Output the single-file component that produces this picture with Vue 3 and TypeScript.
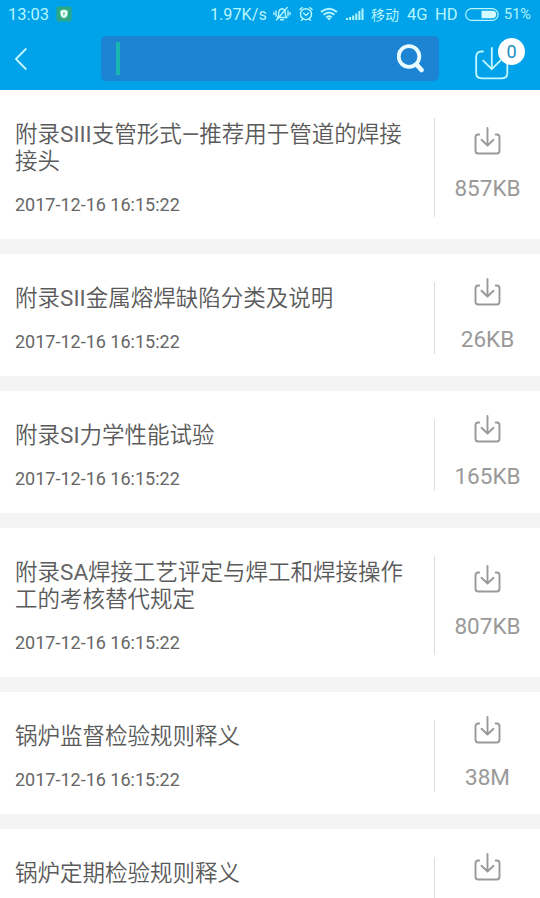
<script setup lang="ts">
interface Doc {
  title: string
  size: string
  date: string
}

const date = '2017-12-16 16:15:22'
const docs: Doc[] = [
  { title: '附录SIII支管形式—推荐用于管道的焊接接头', size: '857KB', date },
  { title: '附录SII金属熔焊缺陷分类及说明', size: '26KB', date },
  { title: '附录SI力学性能试验', size: '165KB', date },
  { title: '附录SA焊接工艺评定与焊工和焊接操作工的考核替代规定', size: '807KB', date },
  { title: '锅炉监督检验规则释义', size: '38M', date },
  { title: '锅炉定期检验规则释义', size: '38M', date },
]

// Splits a title into Latin and Chinese runs, which are set in different weights.
const runs = (title: string): string[] => title.split(/([A-Z—]+)/).filter(Boolean)
const isLatin = (run: string): boolean => /^[A-Z—]/.test(run)
</script>

<template>
  <div class="screen">
    <header class="header">
      <div class="status">
        <span class="time">13:03</span>
        <svg class="shield" width="16" height="16" viewBox="0 0 16 16">
          <rect x="0.5" y="0.5" width="15" height="15" rx="2" fill="#2ba885" />
          <path d="M8 3.6 11.6 4.8V8.4Q11.3 11 8 12.2 4.7 11 4.4 8.4V4.8Z" fill="#e4fff0" />
          <path d="M8.4 5.8 6.7 8.3H7.7L7.4 10 9.2 7.5H8.2Z" fill="#2ba885" />
        </svg>
        <span class="speed">1.97K/s</span>
        <svg class="bell" width="18" height="16" viewBox="0 0 18 16" fill="none" stroke="#b5f6ff" stroke-width="1.4" stroke-linecap="round">
          <path d="M4.5 11.5Q5.8 10 5.8 6.5 6 3 9 2.7 12 3 12.2 6.5 12.2 10 13.5 11.5H4.5M7.5 13.8H10.5M14.3 1.5 3.5 14M3 5V10M15 5V10M1 6.5V8.5M17 6.5V8.5" />
        </svg>
        <svg class="alarm" width="14" height="16" viewBox="0 0 14 16" fill="none" stroke="#b5f6ff" stroke-width="1.4" stroke-linecap="round">
          <circle cx="7" cy="8.2" r="5.5" />
          <path d="M4.6 7.3 7 9.3 9.4 7.3M0.9 3.5 3.1 1.6M13.1 3.5 10.9 1.6M3.5 13.3 2.6 14.3M10.5 13.3 11.4 14.3" />
        </svg>
        <svg class="wifi" width="18" height="14" viewBox="0 0 18 14" fill="none" stroke="#b5f6ff" stroke-width="1.9">
          <path d="M1 5Q9-1.6 17 5M3.6 7.8Q9 3.2 14.4 7.8M6.2 10.3Q9 8 11.8 10.3" />
          <path d="M7 11.4Q9 10 11 11.4L9 13.5Z" fill="#b5f6ff" stroke="none" />
        </svg>
        <svg class="signal" width="18" height="12" viewBox="0 0 18 12" fill="#b5f6ff">
          <path d="M0 10H2V12H0ZM3.1 9H5.1V12H3.1ZM6.2 7.5H8.2V12H6.2ZM9.3 5.5H11.3V12H9.3ZM12.4 3H14.4V12H12.4ZM15.5 0.5H17.5V12H15.5Z" />
        </svg>
        <span class="carrier">移动</span>
        <span class="network">4G</span>
        <span class="hd">HD</span>
        <svg class="battery" width="34" height="13" viewBox="0 0 34 13">
          <rect x="0.7" y="0.7" width="32.4" height="11.6" rx="5.8" fill="none" stroke="#b5f6ff" stroke-width="1.2" />
          <path d="M16.5 2.8H27.5A3.7 3.7 0 0 1 27.5 10.2H16.5Z" fill="#d3fbff" />
        </svg>
        <span class="percent">51%</span>
      </div>
      <div class="toolbar">
        <svg class="back" width="14" height="24" viewBox="0 0 14 24" fill="none" stroke="#c4f8ff" stroke-width="1.8">
          <path d="M12.3 1.5 1.9 12 12.3 22.5" />
        </svg>
        <div class="search">
          <span class="caret"></span>
          <svg width="28" height="30" viewBox="0 0 28 30" fill="none" stroke="#e6fcff">
            <circle cx="12" cy="12.5" r="10.3" stroke-width="3.8" />
            <path d="M20 21 24.5 26" stroke-width="4.8" stroke-linecap="round" />
          </svg>
        </div>
        <div class="queue">
          <svg width="34" height="34" viewBox="0 0 34 34" fill="none" stroke="#c4f8ff" stroke-width="1.8" stroke-linecap="round" stroke-linejoin="round">
            <path d="M8 4.5H6.5Q1.2 4.5 1.2 9.8V26Q1.2 31.3 6.5 31.3H27Q32.3 31.3 32.3 26V9.8Q32.3 4.5 27 4.5H25.5M16.8 1V22.2M8.2 13.6 16.8 22.2 25.4 13.6" />
          </svg>
          <span class="badge">0</span>
        </div>
      </div>
    </header>
    <main class="list">
      <article v-for="doc in docs" :key="doc.title" class="card">
        <div class="info">
          <h2><span v-for="(run, i) in runs(doc.title)" :key="i" :class="{ latin: isLatin(run) }">{{ run }}</span></h2>
          <time>{{ doc.date }}</time>
        </div>
        <div class="download">
          <svg width="27" height="28" viewBox="0 0 27 28" fill="none" stroke="#999" stroke-width="1.9" stroke-linecap="round" stroke-linejoin="round">
            <path d="M5.3 7.5H4.2Q1.5 7.5 1.5 10.2V23.8Q1.5 26.5 4.2 26.5H22.8Q25.5 26.5 25.5 23.8V10.2Q25.5 7.5 22.8 7.5H21.7M13.5 1V18.3M7.5 12.8 13.5 18.5 19.5 12.8" />
          </svg>
          <span>{{ doc.size }}</span>
        </div>
      </article>
    </main>
  </div>
</template>

<style>
body {
  background: #f4f4f4;
}
</style>

<style scoped>
.screen {
  width: 540px;
  height: 898px;
  overflow: hidden;
  background: #f4f4f4;
  font-family: Roboto, 'Noto Sans CJK SC', sans-serif;
}
.header {
  height: 90px;
  background: #00a2e9;
  color: #b5f6ff;
}
.status {
  display: flex;
  align-items: center;
  height: 28px;
  padding-left: 8px;
  font-size: 16.5px;
  line-height: 28px;
  white-space: nowrap;
}
.status svg {
  flex: none;
}
.status span {
  padding-top: 1px;
}
.time {
  width: 48px;
}
.speed {
  width: 63px;
  margin-left: 138px;
  font-size: 16.2px;
}
.alarm {
  margin-left: 8px;
}
.wifi {
  margin-left: 7px;
}
.signal {
  margin-left: 8px;
}
.carrier {
  width: 36px;
  margin-left: 7px;
  font-size: 14px;
}
.network {
  width: 28px;
}
.hd {
  width: 30px;
}
.percent {
  margin-left: 5px;
  font-size: 14.5px;
}
.toolbar {
  display: flex;
  align-items: center;
  height: 61px;
  padding-left: 14px;
}
.search {
  display: flex;
  align-items: center;
  justify-content: space-between;
  box-sizing: border-box;
  width: 338px;
  height: 45px;
  margin-left: 73px;
  padding: 0 14px 0 15px;
  border-radius: 5px;
  background: #1c84d2;
}
.caret {
  width: 4px;
  height: 33px;
  background: #1bb5b2;
}
.queue {
  position: relative;
  height: 34px;
  margin: 11px 0 0 36px;
}
.queue svg {
  display: block;
}
.badge {
  position: absolute;
  top: -9px;
  left: 23px;
  width: 27px;
  height: 27px;
  border-radius: 50%;
  background: #fff;
  color: #168cbd;
  font-size: 18px;
  line-height: 28px;
  text-align: center;
}
.list {
  display: flex;
  flex-direction: column;
  gap: 15px;
}
.card {
  display: flex;
  flex: none;
  background: #fff;
}
.info {
  box-sizing: border-box;
  width: 435px;
  margin: 28px 0 22px;
  padding: 3px 24px 2px 15px;
  border-right: 1px solid #ddd;
}
h2 {
  margin: 0;
  color: #5a5a5a;
  font-size: 22.5px;
  font-weight: 350;
  line-height: 27px;
}
.latin {
  color: #666;
  font-weight: 400;
}
time {
  display: block;
  margin-top: 19px;
  color: #666;
  font-size: 18px;
  line-height: 21px;
}
.download {
  display: flex;
  flex: 1;
  flex-direction: column;
  align-items: center;
  justify-content: center;
  gap: 20px;
  color: #999;
  font-size: 22.5px;
  line-height: 27px;
}
.download svg {
  flex: none;
}
</style>
